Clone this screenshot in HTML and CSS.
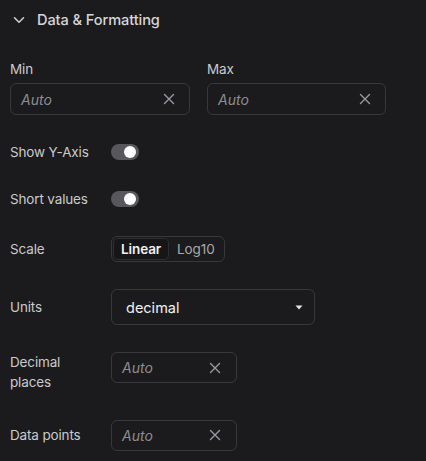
FILE: index.html
```html
<!DOCTYPE html>
<html>
<head>
<meta charset="utf-8">
<link rel="stylesheet" href="styles.css">
</head>
<body>
<div class="panel">
  <div class="header">
    <svg class="chev" width="12" height="8" viewBox="0 0 12 8"><path d="M1.5 1.8 L6 6.2 L10.5 1.8" fill="none" stroke="#cfcfcf" stroke-width="1.6" stroke-linecap="round" stroke-linejoin="round"/></svg>
    <span class="title">Data &amp; Formatting</span>
  </div>

  <div class="minmax">
    <div class="field">
      <div class="flabel">Min</div>
      <div class="input wide"><span class="ph">Auto</span><svg class="x" width="12" height="12" viewBox="0 0 12 12"><path d="M1.5 1.5 L10.5 10.5 M10.5 1.5 L1.5 10.5" stroke="#9a9a9e" stroke-width="1.4" stroke-linecap="round"/></svg></div>
    </div>
    <div class="field">
      <div class="flabel">Max</div>
      <div class="input wide"><span class="ph">Auto</span><svg class="x" width="12" height="12" viewBox="0 0 12 12"><path d="M1.5 1.5 L10.5 10.5 M10.5 1.5 L1.5 10.5" stroke="#9a9a9e" stroke-width="1.4" stroke-linecap="round"/></svg></div>
    </div>
  </div>

  <div class="row r-y">
    <div class="rlabel">Show Y-Axis</div>
    <div class="toggle"><span class="knob"></span></div>
  </div>

  <div class="row r-short">
    <div class="rlabel">Short values</div>
    <div class="toggle"><span class="knob"></span></div>
  </div>

  <div class="row r-scale">
    <div class="rlabel">Scale</div>
    <div class="seg">
      <span class="opt active">Linear</span><span class="opt">Log10</span>
    </div>
  </div>

  <div class="row r-units">
    <div class="rlabel">Units</div>
    <div class="select"><span>decimal</span><svg width="8" height="5" viewBox="0 0 8 5"><path d="M0.5 0.5 H7.5 L4 4.5 Z" fill="#e6e6e6"/></svg></div>
  </div>

  <div class="row r-dec">
    <div class="rlabel">Decimal<br>places</div>
    <div class="input small"><span class="ph">Auto</span><svg class="x" width="12" height="12" viewBox="0 0 12 12"><path d="M1.5 1.5 L10.5 10.5 M10.5 1.5 L1.5 10.5" stroke="#9a9a9e" stroke-width="1.4" stroke-linecap="round"/></svg></div>
  </div>

  <div class="row r-pts">
    <div class="rlabel">Data points</div>
    <div class="input small"><span class="ph">Auto</span><svg class="x" width="12" height="12" viewBox="0 0 12 12"><path d="M1.5 1.5 L10.5 10.5 M10.5 1.5 L1.5 10.5" stroke="#9a9a9e" stroke-width="1.4" stroke-linecap="round"/></svg></div>
  </div>
</div>
</body>
</html>
```
FILE: styles.css
```css
html, body {
  margin: 0;
  padding: 0;
  background: #1b1b1d;
}
body {
  width: 426px;
  height: 461px;
  overflow: hidden;
  font-family: Inter, "Noto Sans", sans-serif;
  color: #cacacc;
}
.panel {
  padding: 0 40px 0 10px;
}
.header {
  height: 40px;
  display: flex;
  align-items: center;
}
.chev {
  margin-left: 3px;
  margin-right: 12px;
}
.title {
  font-size: 14.6px;
  letter-spacing: -0.1px;
  color: #d6d6d8;
  font-weight: 500;
}
.minmax {
  margin-top: 19px;
  display: grid;
  grid-template-columns: 180px 179px;
  column-gap: 17px;
}
.flabel {
  font-size: 13.5px;
  letter-spacing: -0.15px;
  line-height: 20px;
  height: 20px;
  margin-bottom: 4px;
  color: #cacacc;
}
.input {
  box-sizing: border-box;
  height: 32px;
  border: 1px solid #38383b;
  border-radius: 6px;
  display: flex;
  align-items: center;
  justify-content: space-between;
  padding: 0 14px 0 10px;
}
.input.small {
  width: 126px;
  height: 31px;
  padding-right: 15px;
}
.ph {
  font-style: italic;
  font-size: 14px;
  color: #8e8e92;
}
.x { display: block; }
.row {
  display: flex;
  align-items: center;
}
.rlabel {
  width: 101px;
  flex: none;
  font-size: 13.5px;
  letter-spacing: -0.15px;
  line-height: 20px;
  color: #cacacc;
}
.r-y { margin-top: 25px; height: 24px; }
.r-short { margin-top: 23px; height: 24px; }
.r-scale { margin-top: 25px; height: 26px; }
.r-units { margin-top: 27px; height: 36px; }
.r-dec { margin-top: 27px; height: 40px; align-items: flex-start; }
.r-pts { margin-top: 27px; height: 32px; }
.toggle {
  width: 28px;
  height: 16px;
  border-radius: 8px;
  background: #58585c;
  position: relative;
}
.knob {
  position: absolute;
  right: 3px;
  top: 2px;
  width: 12px;
  height: 12px;
  border-radius: 50%;
  background: #ffffff;
}
.seg {
  box-sizing: border-box;
  height: 26px;
  display: flex;
  border: 1px solid #38383b;
  border-radius: 6px;
  padding: 1px;
}
.opt {
  display: flex;
  align-items: center;
  padding: 0 8px;
  font-size: 13.5px;
  letter-spacing: -0.1px;
  color: #a9a9ad;
}
.opt.active {
  color: #f2f2f3;
  font-weight: 600;
  background: #161618;
  border: 1px solid #2e2e31;
  border-radius: 5px;
  padding: 0 7px;
}
.select {
  box-sizing: border-box;
  width: 204px;
  height: 36px;
  border: 1px solid #38383b;
  border-radius: 6px;
  display: flex;
  align-items: center;
  justify-content: space-between;
  padding: 0 11px 0 14px;
  font-size: 14.5px;
  color: #f0f0f1;
}
.select svg { display: block; }
```
